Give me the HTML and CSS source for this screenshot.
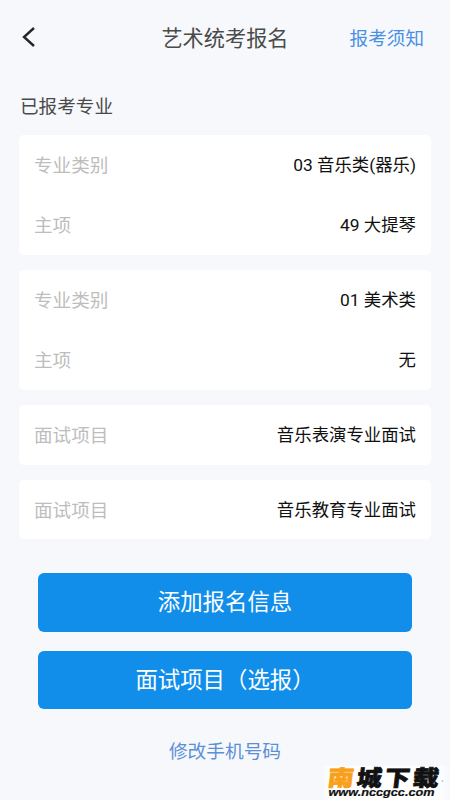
FILE: index.html
```html
<!DOCTYPE html>
<html lang="zh-CN">
<head>
<meta charset="utf-8">
<title>艺术统考报名</title>
<link rel="stylesheet" href="styles.css">
</head>
<body>
<header class="bar">
  <svg class="back" viewBox="0 0 14 22" fill="none"><path d="M12 2 2 11 12 20"/></svg>
  <h1 class="title">艺术统考报名</h1>
  <a class="notice">报考须知</a>
</header>
<main>
  <h2 class="section">已报考专业</h2>
  <div class="cards">
    <section class="card">
      <div class="row"><span class="label">专业类别</span><span class="value">03 音乐类(器乐)</span></div>
      <div class="row"><span class="label">主项</span><span class="value">49 大提琴</span></div>
    </section>
    <section class="card">
      <div class="row"><span class="label">专业类别</span><span class="value">01 美术类</span></div>
      <div class="row"><span class="label">主项</span><span class="value">无</span></div>
    </section>
    <section class="card">
      <div class="row"><span class="label">面试项目</span><span class="value">音乐表演专业面试</span></div>
    </section>
    <section class="card">
      <div class="row"><span class="label">面试项目</span><span class="value">音乐教育专业面试</span></div>
    </section>
  </div>
  <div class="actions">
    <button class="btn">添加报名信息</button>
    <button class="btn">面试项目（选报）</button>
    <a class="phone">修改手机号码</a>
  </div>
</main>
<svg class="mark" viewBox="0 0 130 42">
  <g transform="translate(7 28.500) skewX(-7)" class="mark-name">
    <text class="orange" x="0" y="-1" textLength="26" lengthAdjust="spacingAndGlyphs">南</text>
    <text x="29" y="-1" textLength="25" lengthAdjust="spacingAndGlyphs">城</text>
    <text x="57" y="-1" textLength="25" lengthAdjust="spacingAndGlyphs">下</text>
    <text x="85" y="-1" textLength="26" lengthAdjust="spacingAndGlyphs">载</text>
  </g>
  <text class="mark-url" x="8.500" y="38" textLength="106" lengthAdjust="spacingAndGlyphs">www.nccgcc.com</text>
  <circle cx="122.500" cy="23" r=".8" fill="#8fa3c4"/>
</svg>
</body>
</html>
```

FILE: styles.css
```css
* { box-sizing: border-box; }

body {
  position: relative;
  width: 450px;
  height: 800px;
  margin: 0;
  overflow: hidden;
  background: #f6f8fc;
  color: #4a4a4a;
  font-family: Roboto, "Noto Sans CJK SC", sans-serif;
}

h1, h2 { margin: 0; font-weight: 400; }

.bar {
  display: grid;
  grid-template-columns: 1fr auto 1fr;
  align-items: center;
  height: 76px;
  padding: 2px 26px 0 22px;
}

.back {
  width: 14px;
  height: 22px;
  margin-top: -5px;
}

.back path {
  stroke: #25262a;
  stroke-width: 2.4;
}

.title {
  padding-left: 4px;
  font-size: 21.2px;
  line-height: 30px;
}

.notice {
  justify-self: end;
  color: #4a90e2;
  font-size: 18.6px;
  line-height: 28px;
}

.section {
  height: 59px;
  padding: 17px 20px 0;
  font-size: 18.6px;
  line-height: 28px;
}

.cards {
  display: flex;
  flex-direction: column;
  gap: 15px;
  padding: 0 19px;
}

.card {
  padding: 0 15px;
  border-radius: 5px;
  background: #fff;
}

.row {
  display: flex;
  align-items: center;
  justify-content: space-between;
  height: 60px;
  padding-bottom: 3px;
}

.card:last-child .row { height: 59px; padding-bottom: 2px; }

.label { color: #bdbdbd; font-size: 18.6px; }

.value {
  padding-bottom: 1px;
  color: #111;
  font-size: 17.4px;
}

.actions {
  display: flex;
  flex-direction: column;
  align-items: center;
  padding: 34px 38px 0;
}

.btn {
  width: 374px;
  height: 58.5px;
  margin-bottom: 19px;
  padding: 0;
  border: 0;
  border-radius: 6px;
  background: #118eea;
  color: #fff;
  font: 22.4px/58px Roboto, "Noto Sans CJK SC", sans-serif;
}

.phone {
  margin-top: 10px;
  color: #5b90d6;
  font-size: 18.7px;
  line-height: 28px;
}

.mark {
  position: absolute;
  right: 0;
  bottom: 0;
  width: 130px;
  height: 42px;
  background: linear-gradient(90deg, transparent, #fff 10%, #fff 90%, transparent) 0 8px no-repeat;
}

.mark-name {
  font: 900 22px "Noto Sans CJK SC", sans-serif;
  fill: #111;
  stroke: #111;
  stroke-width: .7;
}

.mark-name .orange { fill: #f9a01b; stroke: #f9a01b; }

.mark-url {
  font: italic 700 10.5px "Liberation Sans", sans-serif;
  fill: #111;
  stroke: #111;
  stroke-width: .2;
}
```
